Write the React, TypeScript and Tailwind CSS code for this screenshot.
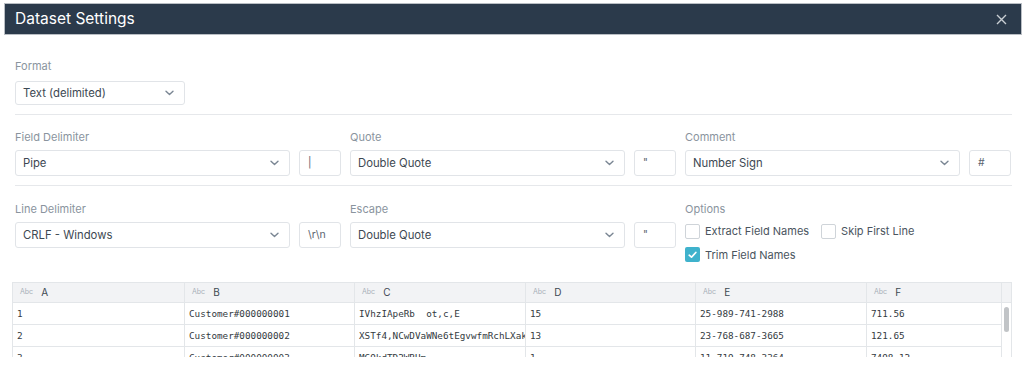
import React from "react";

const Chevron = () => (
  <svg width="9" height="6" viewBox="0 0 9 6" className="shrink-0">
    <path d="M1 1.2 L4.5 4.6 L8 1.2" fill="none" stroke="#7b8794" strokeWidth="1.4" strokeLinecap="round" strokeLinejoin="round" />
  </svg>
);

const Select = ({ value, w, h }: { value: string; w: string; h: string }) => (
  <div className={`${w} ${h} border border-[#e1e4e8] rounded-[3px] flex items-center justify-between pl-[7px] pr-[10px] text-[11.3px] text-[#3d4852] bg-white`}>
    <span>{value}</span>
    <Chevron />
  </div>
);

const SmallInput = ({ value }: { value: string }) => (
  <div className="w-[42px] h-[26px] border border-[#e1e4e8] rounded-[3px] flex items-center pl-[8px] text-[10.5px] text-[#5b6570] bg-white">
    {value}
  </div>
);

const Label = ({ children }: { children: React.ReactNode }) => (
  <div className="text-[11px] text-[#8a949e] h-[14px] leading-[14px] mb-[6px]">{children}</div>
);

const Group = ({ label, select, input }: { label: string; select: string; input: string }) => (
  <div className="w-[326px]">
    <Label>{label}</Label>
    <div className="flex gap-[9px]">
      <Select value={select} w="w-[275px]" h="h-[26px]" />
      <SmallInput value={input} />
    </div>
  </div>
);

const Checkbox = ({ checked, label }: { checked?: boolean; label: string }) => (
  <div className="flex items-center gap-[5px] text-[11px] text-[#4a545e]">
    {checked ? (
      <div className="w-[15px] h-[15px] rounded-[2px] bg-[#3fb2cc] flex items-center justify-center">
        <svg width="9" height="8" viewBox="0 0 9 8">
          <path d="M1.2 4.2 L3.5 6.2 L7.8 1.5" fill="none" stroke="white" strokeWidth="1.7" strokeLinecap="round" strokeLinejoin="round" />
        </svg>
      </div>
    ) : (
      <div className="w-[15px] h-[15px] rounded-[2px] border border-[#cfd4d9] bg-white" />
    )}
    <span>{label}</span>
  </div>
);

const cols = [
  { n: "A", w: "w-[171px]" },
  { n: "B", w: "w-[170px]" },
  { n: "C", w: "w-[171px]" },
  { n: "D", w: "w-[170px]" },
  { n: "E", w: "w-[171px]" },
  { n: "F", w: "w-[135px]" },
];

const rows = [
  ["1", "Customer#000000001", "IVhzIApeRb  ot,c,E", "15", "25-989-741-2988", "711.56"],
  ["2", "Customer#000000002", "XSTf4,NCwDVaWNe6tEgvwfmRchLXak", "13", "23-768-687-3665", "121.65"],
  ["3", "Customer#000000003", "MG9kdTD2WBHm", "1", "11-719-748-3364", "7498.12"],
];

export default function App() {
  return (
    <div className="w-[1024px] h-[367px] overflow-hidden bg-white" style={{ fontFamily: "Inter, 'Noto Sans', sans-serif" }}>
      <div className="ml-[4px] mr-[2px] mt-[3px] h-[32px] bg-[#2b3a4b] border border-[#b9bec4] flex items-center justify-between pl-[10px] pr-[14px]">
        <span className="text-white text-[15.5px]">Dataset Settings</span>
        <svg width="11" height="11" viewBox="0 0 11 11">
          <path d="M1 1 L10 10 M10 1 L1 10" stroke="#c9ced3" strokeWidth="1.4" />
        </svg>
      </div>

      <div className="pl-[15px] pr-[12px] pt-[24px]">
        <div className="text-[11px] text-[#8a949e] h-[14px] leading-[14px] mb-[8px]">Format</div>
        <Select value="Text (delimited)" w="w-[170px]" h="h-[24px]" />

        <div className="mt-[9px] h-px bg-[#e6e8eb]" />

        <div className="pt-[15px] flex gap-[9px]">
          <Group label="Field Delimiter" select="Pipe" input="|" />
          <Group label="Quote" select="Double Quote" input={'"'} />
          <Group label="Comment" select="Number Sign" input="#" />
        </div>

        <div className="mt-[9px] h-px bg-[#e6e8eb]" />

        <div className="pt-[16px] flex gap-[9px]">
          <Group label="Line Delimiter" select="CRLF - Windows" input="\r\n" />
          <Group label="Escape" select="Double Quote" input={'"'} />
          <div className="w-[326px]">
            <Label>Options</Label>
            <div className="flex gap-[12px] mt-[7px]">
              <Checkbox label="Extract Field Names" />
              <Checkbox label="Skip First Line" />
            </div>
            <div className="mt-[7px]">
              <Checkbox checked label="Trim Field Names" />
            </div>
          </div>
        </div>
      </div>

      <div className="ml-[12px] mt-[19px] w-[1000px] h-[75px] overflow-hidden border border-[#e3e6e9] border-b-0">
        <div className="flex h-[20px] bg-[#f2f3f5] border-b border-[#e3e6e9]">
          {cols.map((c, i) => (
            <div key={c.n} className={`${c.w} ${i > 0 ? "border-l border-[#e3e6e9]" : ""} flex items-center pl-[7px] gap-[8px]`}>
              <span className="text-[7px] text-[#a9b1b9]">Abc</span>
              <span className="text-[10px] text-[#3d4852]">{c.n}</span>
            </div>
          ))}
          <div className="flex-1 border-l border-[#e3e6e9]" />
        </div>
        <div className="flex">
          <div className="flex-1">
            {rows.map((r, ri) => (
              <div key={ri} className="flex h-[22px] border-b border-[#e3e6e9]">
                {r.map((cell, ci) => (
                  <div
                    key={ci}
                    className={`${cols[ci].w} ${ci > 0 ? "border-l border-[#e3e6e9]" : ""} flex items-center pl-[4px] pr-[1px] overflow-hidden whitespace-pre text-[9.3px] text-[#333a41]`}
                    style={{ fontFamily: "'DejaVu Sans Mono', monospace" }}
                  >
                    {cell}
                  </div>
                ))}
              </div>
            ))}
          </div>
          <div className="w-[11px] border-l border-[#e3e6e9] flex justify-center pt-[4px]">
            <div className="w-[5px] h-[25px] rounded-[3px] bg-[#c1c4c7]" />
          </div>
        </div>
      </div>
    </div>
  );
}
